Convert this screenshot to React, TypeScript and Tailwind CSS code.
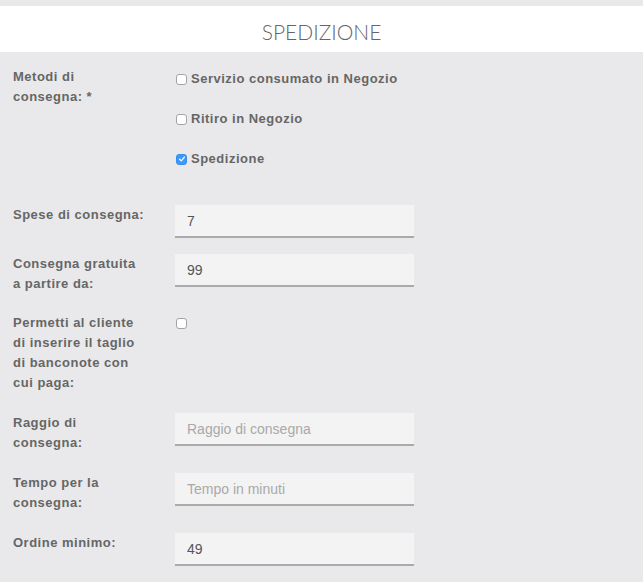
import { useState } from 'react';

const labelFont = "font-['Liberation_Sans',Arial,sans-serif]";

function Box({ checked, onClick }: { checked: boolean; onClick: () => void }) {
  return (
    <span
      onClick={onClick}
      className={`inline-flex items-center justify-center w-[11px] h-[11px] rounded-[3px] shrink-0 cursor-pointer ${
        checked ? 'bg-[#3b99fc] border border-[#3b8fe8]' : 'bg-white border border-[#a4a4a4]'
      }`}
    >
      {checked && (
        <svg viewBox="0 0 10 10" className="w-[8px] h-[8px]">
          <path d="M2 5.3 L4.1 7.4 L8 2.6" fill="none" stroke="white" strokeWidth="1.6" strokeLinecap="round" strokeLinejoin="round" />
        </svg>
      )}
    </span>
  );
}

function Field({ value, placeholder }: { value?: string; placeholder?: string }) {
  return (
    <input
      type="text"
      defaultValue={value}
      placeholder={placeholder}
      className={`w-[239px] h-[33px] bg-[#f3f3f3] border-b-2 border-[#aaaaaa] pl-3 text-[14px] text-[#555] placeholder:text-[#a9a9a9] outline-none ${labelFont}`}
    />
  );
}

// label lines are given explicitly so the wrap matches the original column width
function Row({ lines, className, children, labelClass = '' }: { lines: string[]; className: string; children: React.ReactNode; labelClass?: string }) {
  return (
    <div className={`flex items-start ${className}`}>
      <div className={`w-[162px] shrink-0 ${labelClass}`}>
        {lines.map(l => (
          <span key={l} className="block whitespace-nowrap text-[13px] leading-5 font-bold tracking-[0.5px] text-[#666]">
            {l}
          </span>
        ))}
      </div>
      <div>{children}</div>
    </div>
  );
}

export default function App() {
  const [methods, setMethods] = useState({ servizio: false, ritiro: false, spedizione: true });
  const [banconote, setBanconote] = useState(false);

  const options: { key: keyof typeof methods; label: string }[] = [
    { key: 'servizio', label: 'Servizio consumato in Negozio' },
    { key: 'ritiro', label: 'Ritiro in Negozio' },
    { key: 'spedizione', label: 'Spedizione' },
  ];

  return (
    <div className={`min-h-screen bg-[#e9e9eb] pt-[6px] ${labelFont}`}>
      {/* Header */}
      <div className="h-[46px] bg-white flex items-center justify-center pt-[6px]">
        <h2 className="font-['Lato',sans-serif] font-light text-[21px] text-[#666]">SPEDIZIONE</h2>
      </div>

      <div className="pl-[13px] pb-4">
        <Row lines={['Metodi di', 'consegna: *']} className="mt-[17px]" labelClass="-mt-[2px]">
          <div className="flex flex-col gap-5">
            {options.map(o => (
              <label key={o.key} className="flex items-center gap-1 h-5 pl-px text-[13px] font-bold tracking-[0.5px] text-[#666]">
                <Box
                  checked={methods[o.key]}
                  onClick={() => setMethods(m => ({ ...m, [o.key]: !m[o.key] }))}
                />
                {o.label}
              </label>
            ))}
          </div>
        </Row>

        <Row lines={['Spese di consegna:']} className="mt-9">
          <Field value="7" />
        </Row>

        <Row lines={['Consegna gratuita', 'a partire da:']} className="mt-4">
          <Field value="99" />
        </Row>

        <Row
          lines={['Permetti al cliente', 'di inserire il taglio', 'di banconote con', 'cui paga:']}
          className="mt-[19px]"
        >
          <div className="h-5 flex items-center pl-px">
            <Box checked={banconote} onClick={() => setBanconote(b => !b)} />
          </div>
        </Row>

        <Row lines={['Raggio di', 'consegna:']} className="mt-5">
          <Field placeholder="Raggio di consegna" />
        </Row>

        <Row lines={['Tempo per la', 'consegna:']} className="mt-5">
          <Field placeholder="Tempo in minuti" />
        </Row>

        <Row lines={['Ordine minimo:']} className="mt-5">
          <Field value="49" />
        </Row>
      </div>
    </div>
  );
}
